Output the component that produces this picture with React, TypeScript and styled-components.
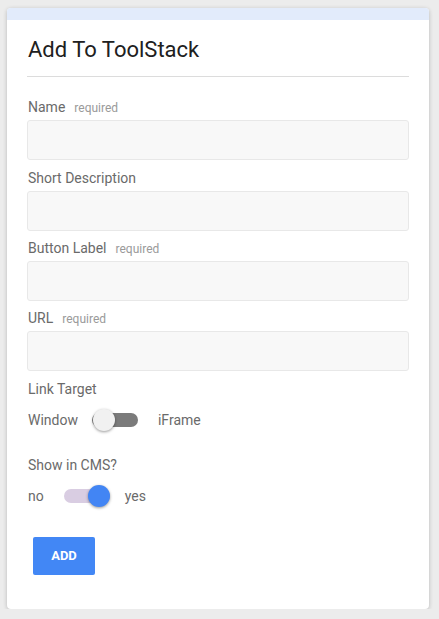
import React, { useState } from 'react';
import styled, { createGlobalStyle } from 'styled-components';

const GlobalStyle = createGlobalStyle`
  body {
    margin: 0;
    background-color: #ececec;
    font-family: Roboto, 'Liberation Sans', sans-serif;
  }
`;

const App = () => {
  const [iframe, setIframe] = useState(false);
  const [showInCms, setShowInCms] = useState(true);

  return (
    <>
      <GlobalStyle />
      <Card>
        <TopBand />
        <Body>
          <Title>Add To ToolStack</Title>
          <Divider />
          <FieldLabel>
            Name<Required>required</Required>
          </FieldLabel>
          <TextInput />
          <FieldLabel>Short Description</FieldLabel>
          <TextInput />
          <FieldLabel>
            Button Label<Required>required</Required>
          </FieldLabel>
          <TextInput />
          <FieldLabel>
            URL<Required>required</Required>
          </FieldLabel>
          <TextInput />
          <FieldLabel>Link Target</FieldLabel>
          <ToggleRow>
            <span>Window</span>
            <Switch $on={iframe} $left={14} $right={20} onClick={() => setIframe(!iframe)}>
              <Knob $on={iframe} />
            </Switch>
            <span>iFrame</span>
          </ToggleRow>
          <FieldLabel $gap={25}>Show in CMS?</FieldLabel>
          <ToggleRow>
            <span>no</span>
            <Switch $on={showInCms} $left={20} $right={15} onClick={() => setShowInCms(!showInCms)}>
              <Knob $on={showInCms} />
            </Switch>
            <span>yes</span>
          </ToggleRow>
          <AddButton>ADD</AddButton>
        </Body>
      </Card>
    </>
  );
};

const Card = styled.div`
  width: 422px;
  margin: 8px 0 0 7px;
  background-color: #ffffff;
  border-radius: 4px;
  box-shadow: 0 1px 4px rgba(0, 0, 0, 0.22);
  overflow: hidden;
`;

const TopBand = styled.div`
  height: 12px;
  background-color: #e2ebfb;
`;

const Body = styled.div`
  display: flex;
  flex-direction: column;
  padding: 16.5px 20px 34px 20px;
`;

const Title = styled.h1`
  margin: 0 0 0 1px;
  font-size: 22px;
  line-height: 26px;
  font-weight: 400;
  color: #202020;
`;

const Divider = styled.div`
  height: 1px;
  margin: 13.5px 0 13px 0;
  background-color: #dcdcdc;
`;

const FieldLabel = styled.div<{ $gap?: number }>`
  height: 16px;
  margin-top: ${(props) => props.$gap ?? 9.33}px;
  margin-bottom: 5px;
  padding-left: 1px;
  font-size: 14px;
  line-height: 16px;
  color: #6a6a6a;
  white-space: nowrap;
`;

const Required = styled.span`
  margin-left: 9px;
  font-size: 12px;
  line-height: 1;
  color: #9a9a9a;
`;

const TextInput = styled.input`
  box-sizing: border-box;
  width: 100%;
  height: 40px;
  padding: 0 10px;
  border: 1px solid #e8e8e8;
  border-radius: 3px;
  background-color: #f8f8f8;
  font-family: Roboto, 'Liberation Sans', sans-serif;
  font-size: 14px;
  outline: none;
`;

const ToggleRow = styled.div`
  display: flex;
  align-items: center;
  height: 24px;
  margin-top: 6px;
  padding-left: 1px;
  font-size: 14px;
  color: #6a6a6a;
`;

const Switch = styled.div<{ $on: boolean; $left: number; $right: number }>`
  position: relative;
  width: 46px;
  height: 14px;
  margin: 0 ${(props) => props.$right}px 0 ${(props) => props.$left}px;
  border-radius: 7px;
  background-color: ${(props) => (props.$on ? '#d9cde2' : '#7b7b7b')};
  cursor: pointer;
`;

const Knob = styled.div<{ $on: boolean }>`
  position: absolute;
  top: -4px;
  left: ${(props) => (props.$on ? '24px' : '1px')};
  width: 22px;
  height: 22px;
  border-radius: 50%;
  background-color: ${(props) => (props.$on ? '#4285f4' : '#f1f1f1')};
  box-shadow: 0 1px 3px rgba(0, 0, 0, 0.4);
`;

const AddButton = styled.button`
  align-self: flex-start;
  width: 62px;
  height: 38px;
  margin: 29px 0 0 6px;
  border: none;
  border-radius: 2px;
  background-color: #4287f5;
  color: #ffffff;
  font-family: Roboto, 'Liberation Sans', sans-serif;
  font-size: 13px;
  font-weight: 700;
  cursor: pointer;
`;

export default App;
